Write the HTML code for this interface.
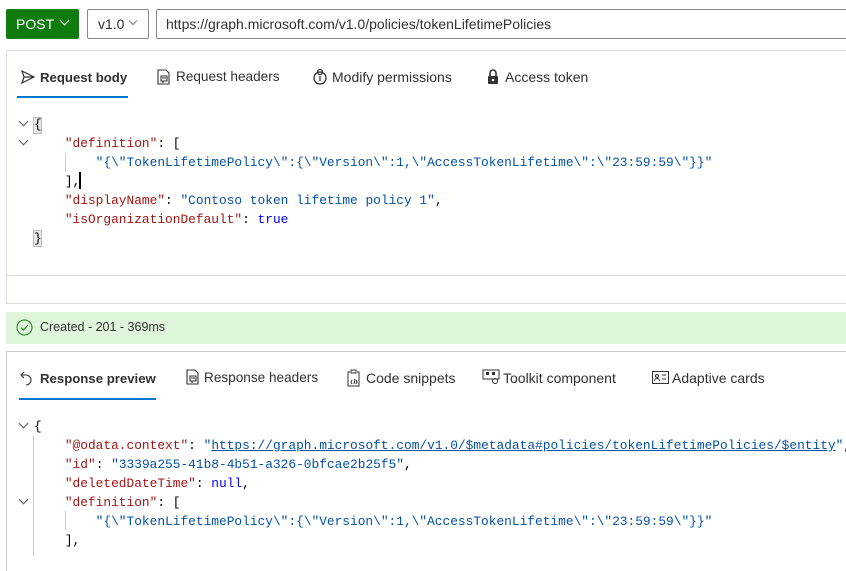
<!DOCTYPE html>
<html><head><style>
*{margin:0;padding:0;box-sizing:border-box}
body{width:846px;height:550px;overflow:hidden;background:#fff;font-family:"Liberation Sans",sans-serif;font-size:14px;color:#323130;position:relative}
.abs{position:absolute}
.code{font-family:"Liberation Mono",monospace;font-size:12.85px;line-height:19px;white-space:pre;position:absolute}
.k{color:#a31515}.s{color:#0451a5}.p{color:#000}
.tab{position:absolute;font-size:14px;color:#323130;white-space:nowrap}
.bt{font-weight:bold;font-size:13.2px;top:1px}
.chev{position:absolute;width:7px;height:7px;border-right:1.3px solid #555;border-bottom:1.3px solid #555;transform:rotate(45deg)}
</style></head><body>
<div class="abs" style="left:6px;top:9px;width:73px;height:30px;background:#107c10;border-radius:2px;color:#fff;font-size:14px;line-height:30px;padding-left:10px">POST</div>
<div class="chev" style="left:61px;top:17px;border-color:#fff"></div>
<div class="abs" style="left:87px;top:9px;width:62px;height:30px;border:1px solid #8a8886;border-radius:2px;font-size:14px;line-height:28px;padding-left:10px">v1.0</div>
<div class="chev" style="left:130px;top:18px;width:6px;height:6px;border-color:#777"></div>
<div class="abs" style="left:156px;top:9px;width:700px;height:30px;border:1px solid #8a8886;border-radius:2px;font-size:14px;line-height:28px;padding-left:9px">https://graph.microsoft.com/v1.0/policies/tokenLifetimePolicies</div>

<div class="abs" style="left:6px;top:50px;width:850px;height:254px;border:1px solid #ddd;background:#fffffe"></div>
<div class="abs" style="left:6px;top:275px;width:850px;height:1px;background:#ddd"></div>
<svg class="abs" style="left:20px;top:69px" width="16" height="16" viewBox="0 0 16 16"><path d="M2 2 L14 8 L2 14 L4 8 Z M4 8 H14" fill="none" stroke="#323130" stroke-width="1.2"/></svg>
<div class="tab" style="left:40px;top:70px;font-weight:bold;font-size:13.2px">Request body</div>
<div class="abs" style="left:17px;top:96px;width:111px;height:2px;background:#0078d4"></div>
<svg class="abs" style="left:156px;top:69px" width="16" height="17" viewBox="0 0 16 17"><path d="M2 1 H10 L13 4 V15 H2 Z M5 7 H11 V12 H5 Z M6 9 H10 M7 12 V14" fill="none" stroke="#323130" stroke-width="1.1"/></svg>
<div class="tab" style="left:176px;top:69px;font-size:13.6px">Request headers</div>
<svg class="abs" style="left:312px;top:68px" width="16" height="18" viewBox="0 0 16 18"><circle cx="8" cy="10" r="6" fill="none" stroke="#323130" stroke-width="1.3"/><circle cx="8" cy="4" r="2.5" fill="none" stroke="#323130" stroke-width="1.3"/><path d="M8 8 V13" stroke="#323130" stroke-width="1.3"/></svg>
<div class="tab" style="left:332px;top:69px">Modify permissions</div>
<svg class="abs" style="left:486px;top:69px" width="14" height="16" viewBox="0 0 14 16"><path d="M4 7 V4 a3 3 0 0 1 6 0 V7" fill="none" stroke="#323130" stroke-width="1.6"/><rect x="2" y="7" width="10" height="8" rx="1" fill="#323130"/><circle cx="7" cy="11" r="1.3" fill="#fff"/></svg>
<div class="tab" style="left:505px;top:69px">Access token</div>

<div class="chev" style="left:20px;top:118px"></div>
<div class="chev" style="left:20px;top:137px"></div>
<div class="abs" style="left:33px;top:117px;width:9px;height:17px;background:#e8e8e8;border:1px solid #bbb"></div>
<div class="abs" style="left:33px;top:230px;width:9px;height:17px;background:#e8e8e8;border:1px solid #bbb"></div>
<div class="abs" style="left:65px;top:153px;width:1px;height:19px;background:#ccc"></div>
<div class="code p" style="left:34px;top:115px">{
    <span class="k">"definition"</span>: [
        <span class="s">"{\"TokenLifetimePolicy\":{\"Version\":1,\"AccessTokenLifetime\":\"23:59:59\"}}"</span>
    ],
    <span class="k">"displayName"</span>: <span class="s">"Contoso token lifetime policy 1"</span>,
    <span class="k">"isOrganizationDefault"</span>: <span style="color:#0000ff">true</span>
}</div>
<div class="abs" style="left:79px;top:172px;width:2px;height:17px;background:#000"></div>

<div class="abs" style="left:6px;top:312px;width:850px;height:32px;background:#dff6dd"></div>
<svg class="abs" style="left:16px;top:319px" width="17" height="17" viewBox="0 0 17 17"><circle cx="8.5" cy="8.5" r="7.5" fill="none" stroke="#107c10" stroke-width="1"/><path d="M5 8.7 L7.5 11 L12 6" fill="none" stroke="#107c10" stroke-width="1.1"/></svg>
<div class="abs" style="left:40px;top:320px;font-size:12.5px;color:#323130">Created - 201 - 369ms</div>

<div class="abs" style="left:6px;top:351px;width:850px;height:220px;border:1px solid #ccc;border-bottom:none"></div>
<svg class="abs" style="left:19px;top:370px" width="14" height="16" viewBox="0 0 14 16"><path d="M5 2 L2 5 L5 8 M2 5 H7 a5 5 0 0 1 0 10" fill="none" stroke="#323130" stroke-width="1.1"/></svg>
<div class="tab" style="left:40px;top:371px;font-weight:bold;font-size:13.2px">Response preview</div>
<div class="abs" style="left:19px;top:398px;width:137px;height:2px;background:#0078d4"></div>
<svg class="abs" style="left:185px;top:369px" width="16" height="17" viewBox="0 0 16 17"><path d="M2 1 H10 L13 4 V15 H2 Z M5 7 H11 V12 H5 Z M6 9 H10 M7 12 V14" fill="none" stroke="#323130" stroke-width="1.1"/></svg>
<div class="tab" style="left:204px;top:370px;font-size:13.6px">Response headers</div>
<svg class="abs" style="left:346px;top:369px" width="15" height="18" viewBox="0 0 15 18"><path d="M4 3 H2 V17 H13 V3 H11 M5 1 H10 V4 H5 Z M6 11 L5 13 L6 15 M9 10 L8 15 M10 11 L11 13 L10 15" fill="none" stroke="#323130" stroke-width="1"/></svg>
<div class="tab" style="left:366px;top:370px">Code snippets</div>
<svg class="abs" style="left:482px;top:369px" width="18" height="16" viewBox="0 0 18 16"><rect x="1" y="1" width="16" height="9" fill="none" stroke="#323130"/><rect x="4" y="3" width="3" height="3" fill="#323130"/><rect x="10" y="3" width="3" height="3" fill="#323130"/><circle cx="13" cy="12" r="2.5" fill="none" stroke="#323130"/></svg>
<div class="tab" style="left:503px;top:370px">Toolkit component</div>
<svg class="abs" style="left:652px;top:371px" width="17" height="13" viewBox="0 0 17 13"><rect x="0.5" y="0.5" width="16" height="12" fill="none" stroke="#323130"/><circle cx="5" cy="5" r="1.5" fill="none" stroke="#323130"/><path d="M2.5 10 a2.5 2.5 0 0 1 5 0 M10 4 H14 M10 8 H14" fill="none" stroke="#323130"/></svg>
<div class="tab" style="left:672px;top:370px">Adaptive cards</div>

<div class="chev" style="left:20px;top:420px"></div>
<div class="chev" style="left:20px;top:496px"></div>
<div class="abs" style="left:33px;top:436px;width:1px;height:120px;background:#ccc"></div>
<div class="abs" style="left:65px;top:511px;width:1px;height:19px;background:#ccc"></div>
<div class="code p" style="left:34px;top:417px">{
    <span class="k">"@odata.context"</span>: <span class="s">"<span style="text-decoration:underline">https://graph.microsoft.com/v1.0/$metadata#policies/tokenLifetimePolicies/$entity</span>"</span>,
    <span class="k">"id"</span>: <span class="s">"3339a255-41b8-4b51-a326-0bfcae2b25f5"</span>,
    <span class="k">"deletedDateTime"</span>: <span style="color:#0000ff">null</span>,
    <span class="k">"definition"</span>: [
        <span class="s">"{\"TokenLifetimePolicy\":{\"Version\":1,\"AccessTokenLifetime\":\"23:59:59\"}}"</span>
    ],</div>
</body></html>
